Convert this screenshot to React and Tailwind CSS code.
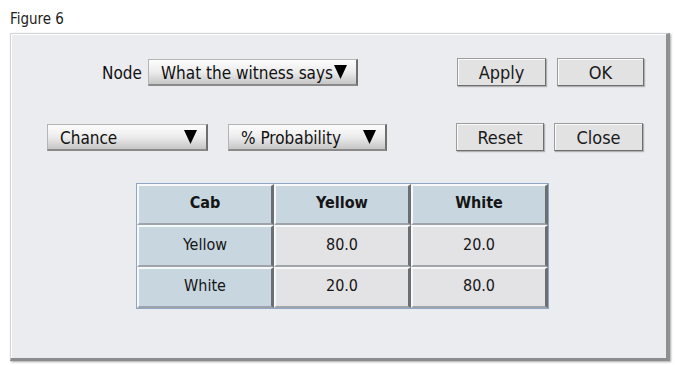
const font = { fontFamily: '"DejaVu Sans Condensed", "Liberation Sans Narrow", "Liberation Sans", sans-serif' };

function Arrow() {
  return (
    <svg width="13" height="14" viewBox="0 0 13 14" className="shrink-0 mt-[1px]">
      <polygon points="0,0 13,0 6.5,14" fill="#000" />
    </svg>
  );
}

function Dropdown({ label, width, tight }) {
  return (
    <div
      className={`h-[27px] flex items-center border border-[#b4b4b4] border-r-[2px] border-b-[2px] border-r-[#6f6f6f] border-b-[#8a8a8a] bg-gradient-to-b from-[#fdfdfd] via-[#ececec] to-[#c6c6c6] text-[17px] text-[#111] pl-[12px] ${tight ? 'pr-[4px] gap-[1px]' : 'pr-[9px] justify-between'} ${width}`}
    >
      <span className="leading-none pt-[3px]">{label}</span>
      <Arrow />
    </div>
  );
}

function Button({ label, width, className = '' }) {
  return (
    <div
      className={`h-[28px] flex items-center justify-center border border-[#9c9c9c] border-r-[#6e6e6e] border-b-[#6e6e6e] bg-[#e2e2e3] shadow-[inset_1px_1px_0_#fafafa,1px_1px_1px_rgba(0,0,0,0.25)] text-[18px] text-[#1a1a1a] ${width} ${className}`}
    >
      {label}
    </div>
  );
}

function Cell({ children, head, blue }) {
  return (
    <div
      className={`flex items-center justify-center pb-[3px] border-t-[2px] border-l-[2px] border-t-[#f6f8fa] border-l-[#f6f8fa] border-r-[3px] border-b-[2px] border-r-[#6c6f72] border-b-[#9ea4aa] text-[16px] text-[#151515] ${head ? 'font-bold' : ''} ${blue ? 'bg-[#c8d6df]' : 'bg-[#e3e3e5]'}`}
    >
      {children}
    </div>
  );
}

export default function App() {
  return (
    <div className="w-[675px] h-[365px] bg-white pl-[10px] pt-[9px]" style={font}>
      <div className="text-[15px] leading-[20px] text-[#222]">Figure 6</div>
      <div className="mt-[4px] w-[660px] h-[328px] bg-[#ebecef] border-t border-l border-[#d2d4d8] border-r-[4px] border-b-[3px] border-r-[#8e9092] border-b-[#8a8c8e] shadow-[inset_1px_1px_0_#ffffff,1px_1px_2px_rgba(0,0,0,0.35)]">
        <div className="flex items-center mt-[24px] h-[28px]">
          <div className="w-[347px] flex items-center justify-end gap-[6px]">
            <span className="text-[17px] text-[#111] pt-[4px]">Node</span>
            <Dropdown label="What the witness says" width="w-[210px]" tight />
          </div>
          <Button label="Apply" width="w-[89px]" className="ml-[99px]" />
          <Button label="OK" width="w-[87px]" className="ml-[11px]" />
        </div>

        <div className="flex items-center mt-[37px] h-[28px]">
          <div className="ml-[36px]">
            <Dropdown label="Chance" width="w-[161px]" />
          </div>
          <div className="ml-[20px]">
            <Dropdown label="% Probability" width="w-[159px]" />
          </div>
          <Button label="Reset" width="w-[88px]" className="ml-[69px]" />
          <Button label="Close" width="w-[89px]" className="ml-[10px]" />
        </div>

        <div className="mt-[32px] ml-[125px] w-[413px] border border-[#8ea6c4] grid grid-cols-[137px_137px_137px] grid-rows-[41px_42px_41px]">
          <Cell head blue>Cab</Cell>
          <Cell head blue>Yellow</Cell>
          <Cell head blue>White</Cell>
          <Cell blue>Yellow</Cell>
          <Cell>80.0</Cell>
          <Cell>20.0</Cell>
          <Cell blue>White</Cell>
          <Cell>20.0</Cell>
          <Cell>80.0</Cell>
        </div>
      </div>
    </div>
  );
}
